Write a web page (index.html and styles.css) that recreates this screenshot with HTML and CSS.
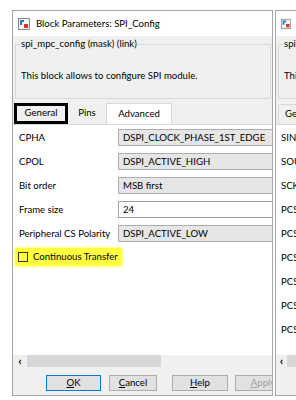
FILE: index.html
```html
<!DOCTYPE html>
<html>
<head>
<meta charset="utf-8">
<link rel="stylesheet" href="styles.css">
</head>
<body>
<div class="desk">
  <div class="dialog main">
    <div class="titlebar">
      <svg class="appicon" width="12" height="12" viewBox="0 0 12 12"><rect x="0.5" y="0.5" width="11" height="11" fill="#f4f4f4" stroke="#8a8a8a"/><path d="M2 2h4v2H4v3H2z" fill="#2b7bbf"/><rect x="6" y="6" width="4" height="4" fill="#d9322b"/></svg>
      <span class="title">Block Parameters: SPI_Config</span>
    </div>
    <div class="body">
      <fieldset class="mask">
        <legend>spi_mpc_config (mask) (link)</legend>
        <p class="desc">This block allows to configure SPI module.</p>
      </fieldset>
      <div class="tabs">
        <div class="tab focus">General</div>
        <div class="tab pins">Pins</div>
        <div class="tab active">Advanced</div>
      </div>
      <div class="pane">
        <div class="row"><span class="label">CPHA</span><span class="field">DSPI_CLOCK_PHASE_1ST_EDGE</span></div>
        <div class="row"><span class="label">CPOL</span><span class="field">DSPI_ACTIVE_HIGH</span></div>
        <div class="row"><span class="label">Bit order</span><span class="field">MSB first</span></div>
        <div class="row"><span class="label">Frame size</span><span class="field edit">24</span></div>
        <div class="row"><span class="label">Peripheral CS Polarity</span><span class="field">DSPI_ACTIVE_LOW</span></div>
        <div class="row"><span class="check"><span class="box"></span>Continuous Transfer</span></div>
      </div>
      <div class="hscroll"><span class="arrow">&lsaquo;</span><span class="thumb"></span></div>
      <div class="buttons">
        <span class="btn ok"><u>O</u>K</span>
        <span class="btn cancel"><u>C</u>ancel</span>
        <span class="btn help"><u>H</u>elp</span>
        <span class="btn apply"><u>A</u>pply</span>
      </div>
    </div>
  </div>
  <div class="dialog side">
    <div class="titlebar">
      <svg class="appicon" width="12" height="12" viewBox="0 0 12 12"><rect x="0.5" y="0.5" width="11" height="11" fill="#f4f4f4" stroke="#8a8a8a"/><path d="M2 2h4v2H4v3H2z" fill="#2b7bbf"/><rect x="6" y="6" width="4" height="4" fill="#d9322b"/></svg>
      <span class="title">Block Parameters: SPI_Pins</span>
    </div>
    <div class="body">
      <fieldset class="mask">
        <legend>spi_mpc_config (mask) (link)</legend>
        <p class="desc">This block allows to configure SPI module.</p>
      </fieldset>
      <div class="tabs">
        <div class="tab">General</div>
      </div>
      <div class="pane">
        <div class="row"><span class="label">SIN</span></div>
        <div class="row"><span class="label">SOUT</span></div>
        <div class="row"><span class="label">SCK</span></div>
        <div class="row"><span class="label">PCS0</span></div>
        <div class="row"><span class="label">PCS1</span></div>
        <div class="row"><span class="label">PCS2</span></div>
        <div class="row"><span class="label">PCS3</span></div>
        <div class="row"><span class="label">PCS4</span></div>
        <div class="row"><span class="label">PCS5</span></div>
      </div>
      <div class="hscroll"><span class="arrow">&lsaquo;</span><span class="thumb"></span></div>
    </div>
  </div>
</div>
</body>
</html>
```
FILE: styles.css
```css
html, body {
  margin: 0;
  padding: 0;
  background: #ffffff;
}
body {
  width: 296px;
  height: 400px;
  overflow: hidden;
  font-family: Lato, "Open Sans", sans-serif;
  font-size: 9.6px;
  color: #000;
}
.desk {
  display: flex;
  gap: 2px;
  padding: 10px 0 0 12px;
  width: 400px;
}
.dialog {
  box-sizing: border-box;
  height: 386px;
  border: 1px solid #a6a6a6;
  display: flex;
  flex-direction: column;
  background: #f0f0f0;
  overflow: hidden;
  flex: none;
}
.main { width: 261px; }
.side { width: 120px; }
.titlebar {
  height: 25px;
  background: #fff;
  display: flex;
  align-items: center;
  padding-left: 5px;
  gap: 6px;
  flex: none;
}
.title { line-height: 12px; }
.body {
  flex: 1;
  display: flex;
  flex-direction: column;
}
.mask {
  margin: 2px 1px 0 2px;
  padding: 0 0 16px 5px;
  border: 1px solid #d9d9d9;
}
.mask legend {
  padding: 0 1px;
  margin-left: -1px;
  line-height: 12px;
}
.desc {
  margin: 20px 0 0 0;
  line-height: 12px;
  white-space: nowrap;
}
.tabs {
  display: flex;
  margin-top: 4px;
  height: 21px;
  align-items: flex-end;
  padding-left: 1px;
}
.tab {
  box-sizing: border-box;
  height: 20px;
  line-height: 18px;
  text-align: center;
  white-space: nowrap;
  flex: none;
}
.tab.focus {
  width: 54px;
  border: 3px solid #000;
  line-height: 14px;
  height: 21px;
  align-self: flex-start;
}
.tab.pins {
  width: 38px;
}
.tab.active {
  width: 66px;
  background: #fff;
  border: 1px solid #d9d9d9;
  border-bottom: none;
  height: 21px;
  line-height: 20px;
}
.side .tab {
  border: 1px solid #d9d9d9;
  border-bottom: none;
  background: #f0f0f0;
  margin-left: 1px;
  padding: 0 6px;
}
.pane {
  height: 231px;
  background: #fff;
  box-sizing: border-box;
  border-top: 1px solid #d9d9d9;
  padding: 0 0 0 6px;
  overflow: hidden;
  flex: none;
}
.side .pane { padding-left: 5px; }
.row {
  height: 24px;
  display: flex;
  align-items: center;
  white-space: nowrap;
}
.label {
  width: 99px;
  flex: none;
}
.field {
  box-sizing: border-box;
  flex: none;
  width: 170px;
  height: 17px;
  line-height: 15px;
  background: #e6e6e6;
  border: 1px solid #adadad;
  padding-left: 4px;
}
.field.edit {
  background: #fff;
  border-color: #a0a0a0;
}
.check {
  display: flex;
  align-items: center;
  gap: 5px;
  margin-left: -4px;
  padding: 3px 4px 3px 3px;
  background: #ffff40;
  border-radius: 3px;
  box-shadow: 0 0 2px 1px #ffff70;
  line-height: 12px;
}
.box {
  box-sizing: border-box;
  width: 10px;
  height: 10px;
  border: 1px solid #333;
  background: transparent;
}
.hscroll {
  height: 12px;
  display: flex;
  align-items: center;
  flex: none;
}
.arrow {
  width: 14px;
  text-align: center;
  font-size: 12px;
  line-height: 12px;
  font-weight: bold;
}
.thumb {
  width: 134px;
  height: 12px;
  background: #d6d6d6;
}
.buttons {
  display: flex;
  margin-top: 8px;
  padding-left: 33px;
}
.btn {
  box-sizing: border-box;
  height: 16px;
  line-height: 14px;
  text-align: center;
  background: #e1e1e1;
  border: 1px solid #adadad;
  flex: none;
}
.btn u { text-decoration: underline; }
.ok { width: 55px; border-color: #0078d7; margin-right: 8px; }
.cancel { width: 48px; margin-right: 15px; }
.help { width: 56px; margin-right: 7px; }
.apply { width: 56px; color: #a0a0a0; }
```
